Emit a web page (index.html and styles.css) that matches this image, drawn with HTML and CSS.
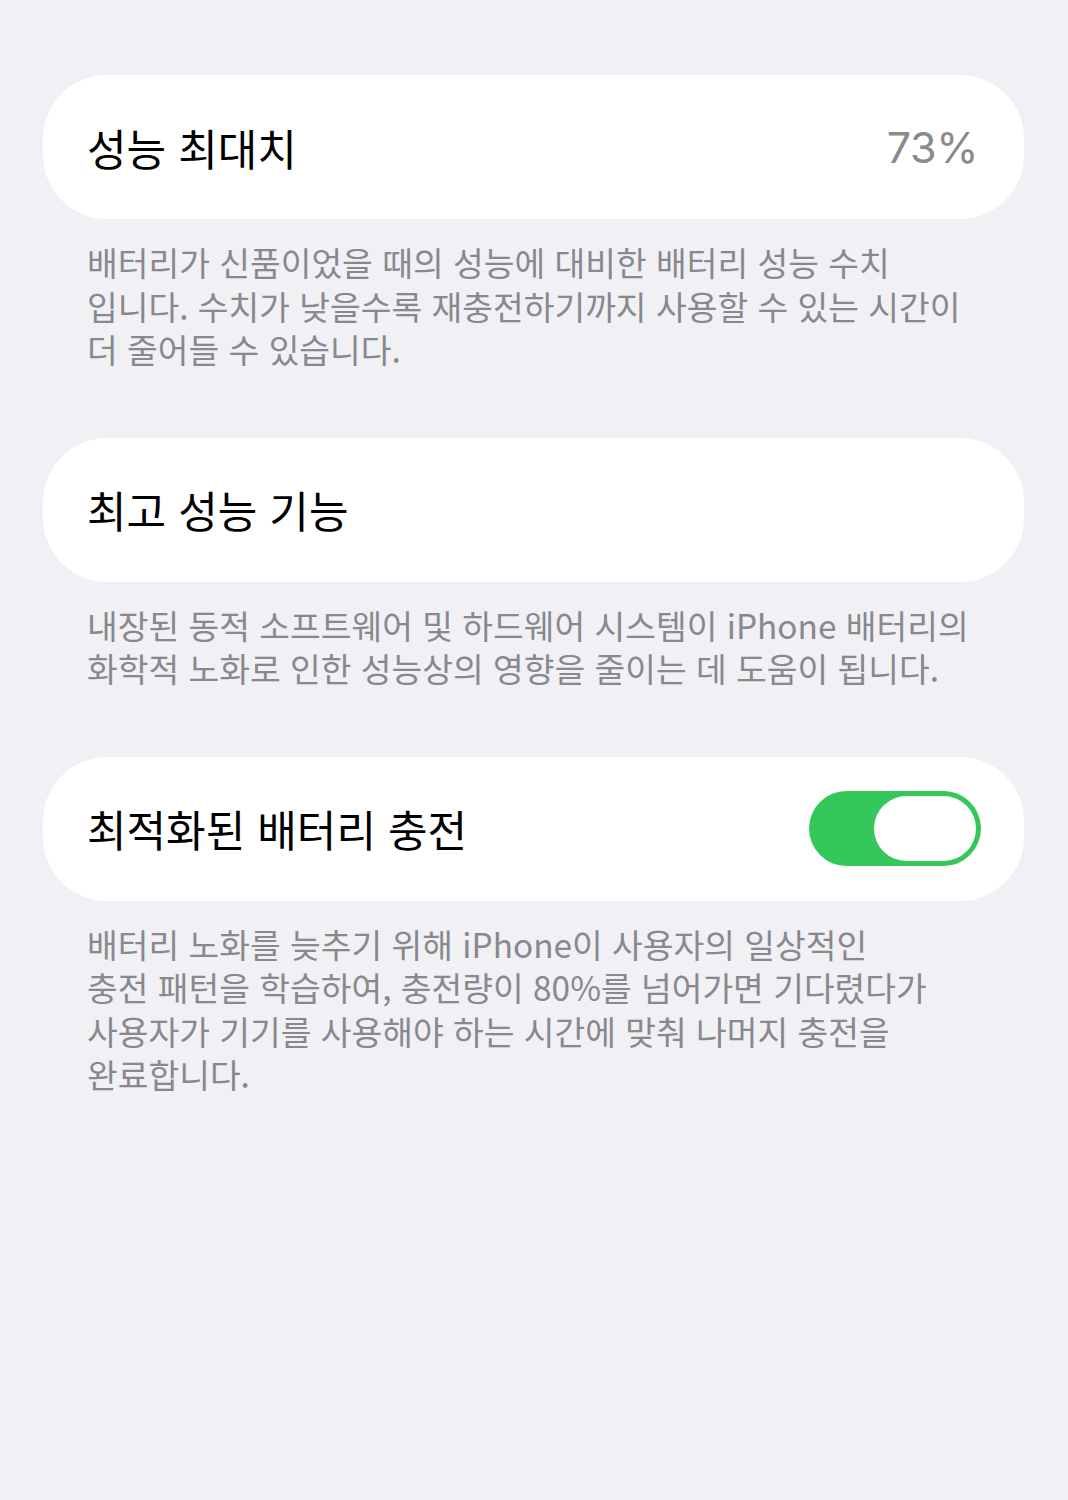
FILE: index.html
```html
<!DOCTYPE html>
<html lang="ko">
<head>
<meta charset="utf-8">
<title>배터리 성능 상태 및 충전</title>
<link rel="stylesheet" href="styles.css">
</head>
<body>
<main class="settings">
  <section class="group">
    <div class="cell">
      <span class="cell-label">성능 최대치</span>
      <span class="cell-value">73%</span>
    </div>
    <p class="footer">배터리가 신품이었을 때의 성능에 대비한 배터리 성능 수치<br>입니다. 수치가 낮을수록 재충전하기까지 사용할 수 있는 시간이<br>더 줄어들 수 있습니다.</p>
  </section>

  <section class="group">
    <div class="cell">
      <span class="cell-label">최고 성능 기능</span>
    </div>
    <p class="footer">내장된 동적 소프트웨어 및 하드웨어 시스템이 iPhone 배터리의<br>화학적 노화로 인한 성능상의 영향을 줄이는 데 도움이 됩니다.</p>
  </section>

  <section class="group">
    <div class="cell">
      <span class="cell-label">최적화된 배터리 충전</span>
      <span class="switch is-on" role="switch" aria-checked="true"><span class="switch-knob"></span></span>
    </div>
    <p class="footer">배터리 노화를 늦추기 위해 iPhone이 사용자의 일상적인<br>충전 패턴을 학습하여, 충전량이 80%를 넘어가면 기다렸다가<br>사용자가 기기를 사용해야 하는 시간에 맞춰 나머지 충전을<br>완료합니다.</p>
  </section>
</main>
</body>
</html>
```

FILE: styles.css
```css
html, body {
  margin: 0;
  padding: 0;
}

body {
  background: #f0f0f5;
  font-family: "Noto Sans CJK KR", "Noto Sans", sans-serif;
  color: #000;
  min-height: 1500px;
}

.settings {
  display: flex;
  flex-direction: column;
  gap: 67px;
  padding: 75px 44px 0 43px;
}

.group {
  display: flex;
  flex-direction: column;
  gap: 21px;
}

.cell {
  background: #fff;
  border-radius: 64px;
  height: 144px;
  box-sizing: border-box;
  padding: 0 46px 0 44px;
  display: flex;
  align-items: center;
  justify-content: space-between;
}

.cell-label {
  font-size: 43px;
  line-height: 1;
}

.cell-value {
  font-family: "Inter", "Noto Sans", sans-serif;
  font-size: 43px;
  line-height: 1;
  color: #8a8a8e;
  letter-spacing: -0.4px;
}

.footer {
  margin: 0;
  padding: 0 44px;
  font-size: 33.4px;
  line-height: 43.5px;
  color: #88888d;
}

.switch {
  width: 172px;
  height: 75px;
  border-radius: 38px;
  background: #34c759;
  box-sizing: border-box;
  padding: 5px;
  display: flex;
  justify-content: flex-end;
  margin-right: -3px;
}

.switch-knob {
  width: 102px;
  height: 65px;
  border-radius: 33px;
  background: #fff;
}
```
